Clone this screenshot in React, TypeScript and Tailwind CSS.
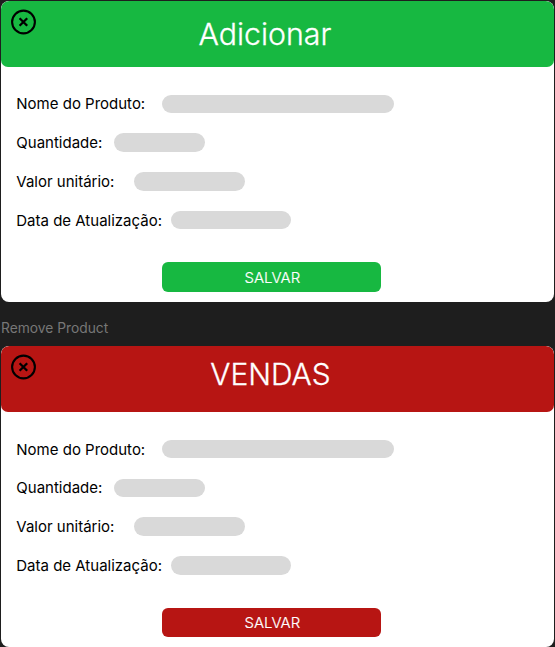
type Theme = { header: string; button: string };

const green: Theme = { header: 'bg-[#17b841]', button: 'bg-[#17b841]' };
const red: Theme = { header: 'bg-[#b71513]', button: 'bg-[#b71513]' };

const fields = [
  { label: 'Nome do Produto:', labelWidth: 'w-[145.7px]', barWidth: 'w-[232px]' },
  { label: 'Quantidade:', labelWidth: 'w-[97.3px]', barWidth: 'w-[91.5px]' },
  { label: 'Valor unitário:', labelWidth: 'w-[118px]', barWidth: 'w-[110.3px]' },
  { label: 'Data de Atualização:', labelWidth: 'w-[154.3px]', barWidth: 'w-[120.8px]' },
];

function CloseIcon() {
  return (
    <svg width="27" height="26" viewBox="0 0 27 26" fill="none" stroke="#000">
      <circle cx="13.5" cy="13" r="11.4" strokeWidth="2.1" />
      <path d="M9.6 9.2l7.6 7.6M17.2 9.2l-7.6 7.6" strokeWidth="2.3" />
    </svg>
  );
}

function ProductCard({ title, titleClass, theme }: { title: string; titleClass: string; theme: Theme }) {
  return (
    <section className={`h-[301px] w-[553px] overflow-hidden rounded-[8px] bg-white`}>
      <header className={`flex h-[66px] rounded-[7px] rounded-t-[8px] pl-[9px] ${theme.header}`}>
        <button type="button" aria-label="Fechar" className="mt-[8px] h-[26px] w-[27px]">
          <CloseIcon />
        </button>
        <h1 className={`whitespace-nowrap font-light leading-[37px] text-white [-webkit-text-stroke:0.3px_white] ${titleClass}`}>{title}</h1>
      </header>
      <div className="flex flex-col gap-[20.5px] pl-[15.3px] pt-[27.7px]">
        {fields.map((field) => (
          <div key={field.label} className="flex h-[18.3px] items-center">
            <span className={`shrink-0 whitespace-nowrap pt-px text-[15px] leading-[18px] ${field.labelWidth}`}>{field.label}</span>
            <span className={`h-[18.3px] rounded-full bg-[#d9d9d9] ${field.barWidth}`} />
          </div>
        ))}
      </div>
      <button
        type="button"
        className={`ml-[160.8px] mt-[33.1px] flex h-[29.3px] w-[219px] items-center justify-center rounded-[6px] pl-[2px] pt-[2px] text-[15px] font-light text-white [-webkit-text-stroke:0.2px_white] ${theme.button}`}
      >
        SALVAR
      </button>
    </section>
  );
}

export default function App() {
  return (
    <main className="h-[647px] w-[555px] overflow-hidden bg-[#1e1e1e] pl-px pt-px font-['Inter',sans-serif] text-black">
      <ProductCard title="Adicionar" titleClass="ml-[161.5px] mt-[15px] text-[30.3px]" theme={green} />
      <p className="flex h-[44.2px] items-center pt-[8px] text-[13.8px] text-[#777777]">Remove Product</p>
      <ProductCard title="VENDAS" titleClass="ml-[173.3px] mt-[10px] text-[29.9px]" theme={red} />
    </main>
  );
}
